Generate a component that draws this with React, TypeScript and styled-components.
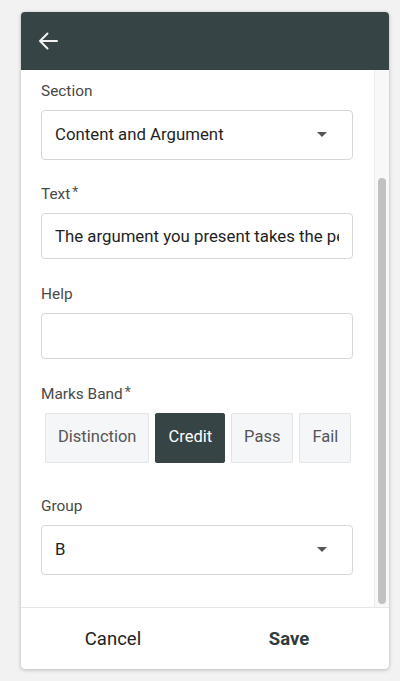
import React from "react";
import styled, { createGlobalStyle } from "styled-components";

const Global = createGlobalStyle`
  html, body { margin: 0; padding: 0; background: #f2f2f2; }
  body { font-family: Roboto, "Liberation Sans", Arial, sans-serif; }
  * { box-sizing: border-box; }
`;

const Page = styled.div`
  padding: 12px 0 0 21px;
  height: 681px;
`;

const Card = styled.div`
  width: 368px;
  height: 657px;
  background: #ffffff;
  border-radius: 4px;
  box-shadow: 0 1px 4px rgba(0, 0, 0, 0.22), 0 0 1px rgba(0, 0, 0, 0.2);
  display: flex;
  flex-direction: column;
  overflow: hidden;
`;

const Header = styled.div`
  height: 58px;
  flex: none;
  background: #374446;
  display: flex;
  align-items: center;
  padding-left: 16px;
`;

const Body = styled.div`
  flex: 1;
  display: flex;
  min-height: 0;
`;

const Content = styled.div`
  flex: 1;
  padding: 12px 21px 0 20px;
  display: flex;
  flex-direction: column;
  overflow: hidden;
`;

const Track = styled.div`
  width: 15px;
  flex: none;
  background: #f8f8f8;
  border-left: 1px solid #ebebeb;
  padding: 108px 0 0 3px;
`;

const Thumb = styled.div`
  width: 8px;
  height: 426px;
  border-radius: 4px;
  background: #c1c1c1;
`;

const Field = styled.div<{ $gap: number }>`
  display: flex;
  flex-direction: column;
  margin-bottom: ${(p) => p.$gap}px;
`;

const Label = styled.div`
  font-size: 15.4px;
  line-height: 18px;
  color: #484848;
  margin-bottom: 10px;
  display: flex;
  align-items: flex-start;
`;

const Star = styled.span`
  font-size: 14px;
  line-height: 14px;
  margin-left: 2px;
  color: #555;
`;

const SelectBox = styled.div`
  height: 50px;
  border: 1px solid #d6d6d6;
  border-radius: 4px;
  display: flex;
  align-items: center;
  justify-content: space-between;
  padding: 0 25px 2px 13px;
  font-size: 16.8px;
  color: #1f1f1f;
`;

const Caret = styled.span`
  width: 0;
  height: 0;
  border-left: 5.5px solid transparent;
  border-right: 5.5px solid transparent;
  border-top: 5px solid #555;
`;

const TextInput = styled.input<{ $h: number }>`
  height: ${(p) => p.$h}px;
  width: 100%;
  border: 1px solid #d6d6d6;
  border-radius: 4px;
  padding: 0 13px 0 13px;
  font-family: Roboto, "Liberation Sans", Arial, sans-serif;
  font-size: 16.8px;
  color: #1f1f1f;
  background: #fff;
  outline: none;
`;

const Toggles = styled.div`
  display: flex;
  gap: 6px;
  padding-left: 4px;
`;

const Toggle = styled.div<{ $active?: boolean }>`
  height: 50px;
  padding: 0 12px 3px;
  display: flex;
  align-items: center;
  font-size: 16.5px;
  border-radius: 2px;
  border: 1px solid ${(p) => (p.$active ? "#374446" : "#e4e5e7")};
  background: ${(p) => (p.$active ? "#374446" : "#f5f6f8")};
  color: ${(p) => (p.$active ? "#ffffff" : "#555")};
`;

const Footer = styled.div`
  height: 62px;
  flex: none;
  border-top: 1px solid #e6e6e6;
  display: flex;
  padding: 0 12px 0 4px;
`;

const FooterButton = styled.div<{ $primary?: boolean }>`
  flex: 1;
  display: flex;
  align-items: center;
  justify-content: center;
  font-size: 18.5px;
  font-weight: ${(p) => (p.$primary ? 700 : 400)};
  color: ${(p) => (p.$primary ? "#2f3b3d" : "#222")};
`;

const BackArrow = () => (
  <svg width="22" height="20" viewBox="0 0 22 20" fill="none">
    <path
      d="M20 10H3M10.5 2.5L3 10l7.5 7.5"
      stroke="#f2f2f2"
      strokeWidth="2"
      strokeLinecap="round"
      strokeLinejoin="round"
    />
  </svg>
);

export default function App() {
  return (
    <>
      <Global />
      <Page>
        <Card>
          <Header>
            <BackArrow />
          </Header>
          <Body>
            <Content>
              <Field $gap={25}>
                <Label>Section</Label>
                <SelectBox>
                  <span>Content and Argument</span>
                  <Caret />
                </SelectBox>
              </Field>
              <Field $gap={26}>
                <Label>
                  Text<Star>*</Star>
                </Label>
                <TextInput
                  $h={46}
                  readOnly
                  value="The argument you present takes the perspective of"
                />
              </Field>
              <Field $gap={26}>
                <Label>Help</Label>
                <TextInput $h={46} readOnly value="" />
              </Field>
              <Field $gap={34}>
                <Label>
                  Marks Band<Star>*</Star>
                </Label>
                <Toggles>
                  <Toggle>Distinction</Toggle>
                  <Toggle $active>Credit</Toggle>
                  <Toggle>Pass</Toggle>
                  <Toggle>Fail</Toggle>
                </Toggles>
              </Field>
              <Field $gap={0}>
                <Label>Group</Label>
                <SelectBox>
                  <span>B</span>
                  <Caret />
                </SelectBox>
              </Field>
            </Content>
            <Track>
              <Thumb />
            </Track>
          </Body>
          <Footer>
            <FooterButton>Cancel</FooterButton>
            <FooterButton $primary>Save</FooterButton>
          </Footer>
        </Card>
      </Page>
    </>
  );
}
